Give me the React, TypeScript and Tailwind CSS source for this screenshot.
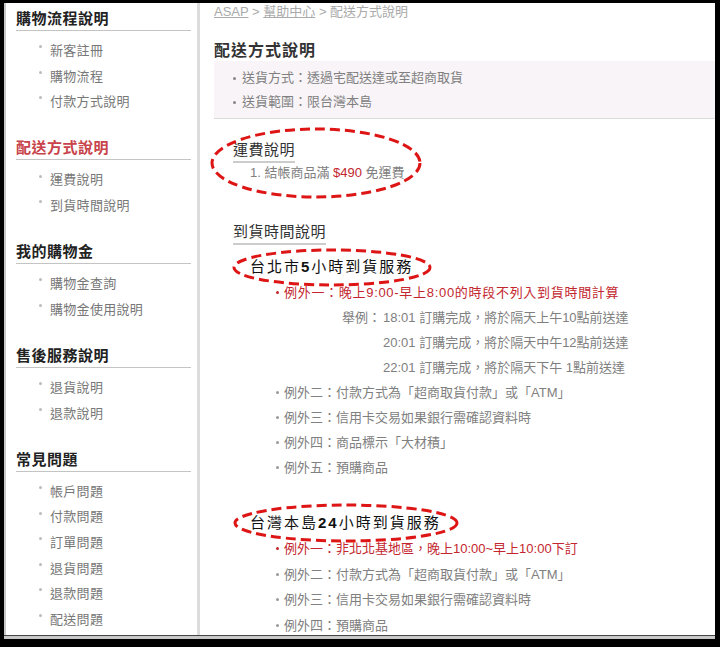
import React from "react"

const sections = [
  { title: "購物流程說明", items: ["新客註冊", "購物流程", "付款方式說明"] },
  { title: "配送方式說明", active: true, items: ["運費說明", "到貨時間說明"] },
  { title: "我的購物金", items: ["購物金查詢", "購物金使用說明"] },
  { title: "售後服務說明", items: ["退貨說明", "退款說明"] },
  { title: "常見問題", items: ["帳戶問題", "付款問題", "訂單問題", "退貨問題", "退款問題", "配送問題"] },
]

// red dashed ring drawn over a heading
const Ring = ({ className, w, h }: { className: string; w: number; h: number }) => (
  <svg className={className} width={w} height={h} viewBox={`0 0 ${w} ${h}`} fill="none">
    <ellipse
      cx={w / 2}
      cy={h / 2}
      rx={w / 2 - 2}
      ry={h / 2 - 2}
      stroke="#dd1515"
      strokeWidth="3"
      strokeDasharray="10 5"
    />
  </svg>
)

const Item = ({ red, children, leading }: { red?: boolean; children: React.ReactNode; leading: string }) => (
  <div className={`flex items-center pl-[43px] ${leading} ${red ? "text-[#c3262e]" : "text-[#808080]"}`}>
    <span className={`w-[3px] h-[3px] rounded-full ${red ? "bg-[#c3262e]" : "bg-[#999]"}`} />
    <span className="ml-[5px]">{children}</span>
  </div>
)

const Sidebar = () => (
  <aside className="w-[194px] shrink-0 border-r-[3px] border-[#dcdcdc] pl-[10px] pr-[6px] pt-[6px]">
    {sections.map((s, i) => (
      <div key={s.title} className={i > 0 ? "mt-[23.6px]" : ""}>
        <h2
          className={`text-[15px] leading-[20px] tracking-[0.5px] font-bold pb-[1px] border-b border-[#c4c4c4] ${
            s.active ? "text-[#c8434a]" : "text-[#222]"
          }`}
        >
          {s.title}
        </h2>
        <ul className="mt-[7px]">
          {s.items.map((it) => (
            <li key={it} className="flex items-center pl-[23px] text-[13px] leading-[25.6px] tracking-[0.3px] text-[#777]">
              <span className="w-[3px] h-[3px] rounded-full bg-[#bbb] mb-[8px]" />
              <span className="ml-[8px]">{it}</span>
            </li>
          ))}
        </ul>
      </div>
    ))}
  </aside>
)

export default function App() {
  return (
    <div className="w-[720px] h-[647px] bg-black pt-[3px] pl-[4px] pr-[5px] pb-[8px] font-['Liberation_Sans','Noto_Sans_CJK_TC',sans-serif]">
      <div className="flex flex-col h-full bg-white">
        <div className="flex flex-1 overflow-hidden border-l-2 border-[#c8c8c8]">
          <Sidebar />

          <main className="relative flex-1 pl-[14px] text-[13px] overflow-hidden">
            {/* breadcrumb */}
            <div className="leading-[18px] text-[#aaa]">
              <span className="underline">ASAP</span> &gt; <span className="underline">幫助中心</span> &gt; 配送方式說明
            </div>

            <h1 className="mt-[20px] text-[16px] leading-[20px] tracking-[1px] font-bold text-[#333]">配送方式說明</h1>

            <div className="bg-[#f8f4f8] border-b border-[#dcdcdc] pt-[5px] pb-[4px] text-[#808080]">
              {["送貨方式：透過宅配送達或至超商取貨", "送貨範圍：限台灣本島"].map((t) => (
                <div key={t} className="flex items-center pl-[19px] leading-[24px]">
                  <span className="w-[3px] h-[3px] rounded-full bg-[#888]" />
                  <span className="ml-[6px]">{t}</span>
                </div>
              ))}
            </div>

            <div className="pl-[19px]">
              {/* 運費說明 */}
              <h3 className="mt-[21px] inline-block text-[15px] leading-[20px] tracking-[0.5px] text-[#333] pb-[1px] border-b-2 border-[#cccccc]">
                運費說明
              </h3>
              <div className="pl-[17px] leading-[20px] text-[#808080]">
                1. 結帳商品滿 <span className="text-[#c3262e]">$490</span> 免運費
              </div>

              {/* 到貨時間說明 */}
              <div>
                <h3 className="mt-[39px] inline-block text-[15px] leading-[20px] tracking-[0.5px] text-[#333] pb-[1px] border-b-2 border-[#cccccc]">
                  到貨時間說明
                </h3>
              </div>

              <div className="mt-[11px] pl-[17px] text-[15px] leading-[22px] tracking-[2px] text-[#111]">
                台北市<b>5</b>小時到貨服務
              </div>
              <div className="mt-[2px]">
                <Item red leading="leading-[25px]">
                  <span className="tracking-[0.7px]">例外一：晚上9:00-早上8:00的時段不列入到貨時間計算</span>
                </Item>
                <div className="pl-[109px] leading-[25px] text-[#808080]">
                  <div className="flex">
                    <span className="w-[41px] shrink-0">舉例：</span>
                    <span>18:01 訂購完成，將於隔天上午10點前送達</span>
                  </div>
                  <div className="pl-[41px]">20:01 訂購完成，將於隔天中午12點前送達</div>
                  <div className="pl-[41px]">22:01 訂購完成，將於隔天下午 1點前送達</div>
                </div>
                <Item leading="leading-[25px]">例外二：付款方式為「超商取貨付款」或「ATM」</Item>
                <Item leading="leading-[25px]">例外三：信用卡交易如果銀行需確認資料時</Item>
                <Item leading="leading-[25px]">例外四：商品標示「大材積」</Item>
                <Item leading="leading-[25px]">例外五：預購商品</Item>
              </div>

              <div className="mt-[32px] pl-[17px] text-[15px] leading-[22px] tracking-[2px] text-[#111]">
                台灣本島<b>24</b>小時到貨服務
              </div>
              <div className="mt-[2px]">
                <Item red leading="leading-[25.6px]">例外一：非北北基地區，晚上10:00~早上10:00下訂</Item>
                <Item leading="leading-[25.6px]">例外二：付款方式為「超商取貨付款」或「ATM」</Item>
                <Item leading="leading-[25.6px]">例外三：信用卡交易如果銀行需確認資料時</Item>
                <Item leading="leading-[25.6px]">例外四：預購商品</Item>
              </div>
            </div>

            <Ring className="absolute left-[10px] top-[124px]" w={212} h={72} />
            <Ring className="absolute left-[32px] top-[245px]" w={200} h={39} />
            <Ring className="absolute left-[33px] top-[500px]" w={226} h={40} />
          </main>
        </div>
        <div className="h-px bg-[#444]" />
        <div className="h-[3px] bg-[#c8c8c8]" />
      </div>
    </div>
  )
}
